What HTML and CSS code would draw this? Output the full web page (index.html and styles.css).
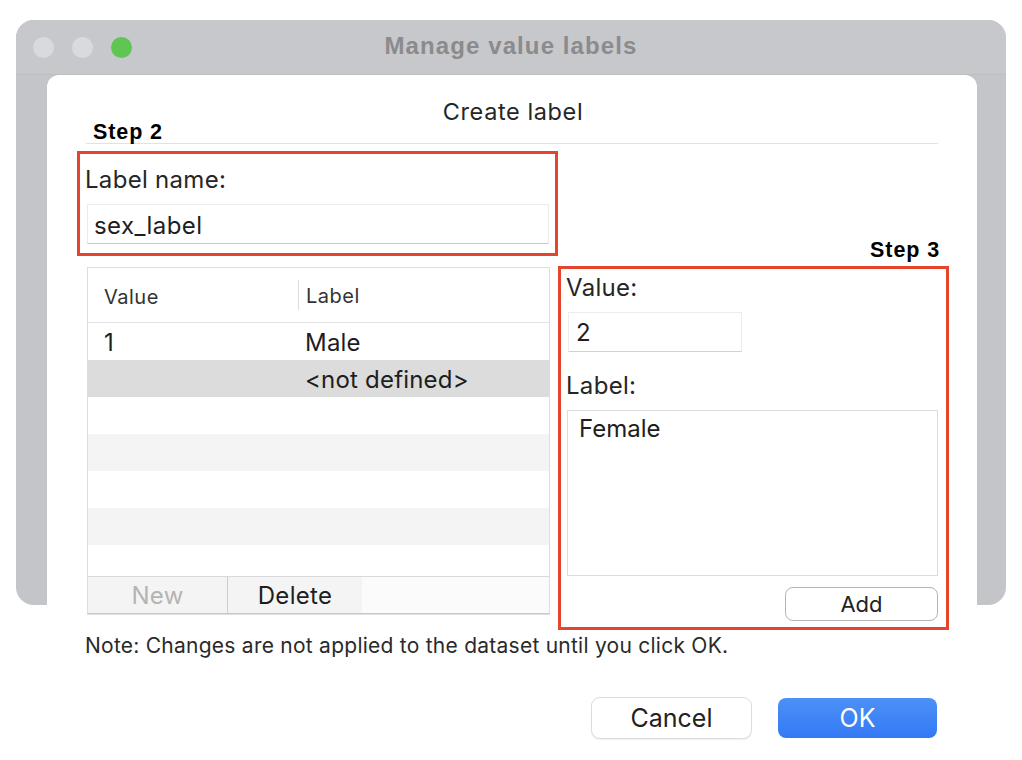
FILE: index.html
```html
<!DOCTYPE html>
<html>
<head>
<meta charset="utf-8">
<link rel="stylesheet" href="styles.css">
</head>
<body>
<div class="window">
  <div class="titlebar">
    <div class="lights">
      <span class="light gray"></span>
      <span class="light gray"></span>
      <span class="light green"></span>
    </div>
    <div class="wintitle">Manage value labels</div>
  </div>
  <div class="sheet">
    <div class="sheet-title">Create label</div>
    <div class="step step2">Step 2</div>
    <div class="sep"></div>
    <div class="main">
      <div class="redbox box1">
        <div class="flabel">Label name:</div>
        <div class="input name-input">sex_label</div>
      </div>
      <div class="table">
        <div class="thead">
          <div class="th c1">Value</div>
          <div class="th c2">Label</div>
        </div>
        <div class="tbody">
          <div class="tr"><div class="td c1">1</div><div class="td c2">Male</div></div>
          <div class="tr sel"><div class="td c1"></div><div class="td c2">&lt;not defined&gt;</div></div>
          <div class="tr"></div>
          <div class="tr alt"></div>
          <div class="tr"></div>
          <div class="tr alt"></div>
          <div class="tr last"></div>
        </div>
        <div class="tbar">
          <div class="tbtn disabled">New</div>
          <div class="tbtn">Delete</div>
          <div class="tfill"></div>
        </div>
      </div>
      <div class="redbox box2">
        <div class="step step3">Step 3</div>
        <div class="flabel">Value:</div>
        <div class="input value-input">2</div>
        <div class="flabel label2">Label:</div>
        <div class="textarea">Female</div>
        <div class="addrow"><div class="addbtn">Add</div></div>
      </div>
    </div>
    <div class="note">Note: Changes are not applied to the dataset until you click OK.</div>
    <div class="actions">
      <div class="btn cancel">Cancel</div>
      <div class="btn ok">OK</div>
    </div>
  </div>
</div>
</body>
</html>
```
FILE: styles.css
```css
html, body {
  margin: 0;
  padding: 0;
  background: #ffffff;
}
body {
  width: 1022px;
  height: 760px;
  overflow: hidden;
  font-family: Inter, "Noto Sans", "Liberation Sans", sans-serif;
  color: #222222;
}
.window {
  margin: 20px 0 0 16px;
  width: 990px;
  height: 585px;
  background: #c4c5c8;
  border-radius: 18px;
  display: flex;
  flex-direction: column;
}
.titlebar {
  height: 55px;
  flex: none;
  background: #c7c8cb;
  border-radius: 18px 18px 0 0;
  border-bottom: 1px solid #bdbec1;
  box-sizing: border-box;
  display: flex;
  align-items: center;
  position: relative;
}
.lights {
  display: flex;
  gap: 18px;
  padding-left: 17px;
}
.light {
  width: 21px;
  height: 21px;
  border-radius: 50%;
  display: block;
}
.light.gray { background: #d9dadf; }
.light.green { background: #5fc553; }
.wintitle {
  position: absolute;
  left: 0;
  right: 0;
  top: 12px;
  text-align: center;
  font-family: "Liberation Sans", Arial, sans-serif;
  font-weight: bold;
  font-size: 24px;
  letter-spacing: 1.1px;
  color: #8b8b8d;
}
.sheet {
  margin: 0 29px 0 31px;
  height: 700px;
  flex: none;
  background: #ffffff;
  border-radius: 12px 12px 0 0;
  padding: 0 28px 0 30px;
  box-sizing: border-box;
}
.sheet-title {
  padding-top: 24px;
  height: 25px;
  line-height: 25px;
  text-align: center;
  font-size: 23.5px;
  letter-spacing: 0.6px;
  color: #262626;
}
.step {
  font-family: "Liberation Sans", Arial, sans-serif;
  font-weight: bold;
  font-size: 21.5px;
  letter-spacing: 0.9px;
  color: #000000;
  line-height: 19px;
}
.step2 {
  padding-left: 16px;
  margin-top: -1px;
}
.sep {
  height: 1px;
  background: #e2e2e2;
  margin: 1px 11px 0 9px;
}
.main {
  margin-top: 7px;
  display: grid;
  grid-template-columns: 481px 391px;
  grid-template-rows: auto auto;
}
.redbox {
  border: 3px solid #e5452d;
  box-sizing: border-box;
}
.box1 {
  grid-column: 1;
  grid-row: 1;
  height: 105px;
  padding: 12px 6px 0 5px;
}
.flabel {
  font-size: 24px;
  letter-spacing: 0.3px;
  line-height: 28px;
  color: #262626;
}
.input {
  background: #ffffff;
  border: 1px solid #ebebeb;
  border-bottom-color: #c9c9c9;
  height: 40px;
  box-sizing: border-box;
  font-size: 24px;
  letter-spacing: 0.4px;
  line-height: 40px;
  color: #1e1e1e;
  padding-left: 6px;
}
.name-input {
  margin: 10px 0 0 2px;
  padding-top: 2px;
  line-height: 38px;
}
.table {
  grid-column: 1;
  grid-row: 2;
  margin: 11px 8px 0 10px;
  height: 348px;
  border: 1px solid #dedede;
  box-sizing: border-box;
  display: flex;
  flex-direction: column;
}
.thead {
  height: 55px;
  flex: none;
  display: flex;
  align-items: center;
  border-bottom: 1px solid #e3e3e3;
  box-sizing: border-box;
  padding-top: 3px;
}
.th {
  font-size: 20px;
  letter-spacing: 0.5px;
  color: #333333;
}
.c1 {
  width: 210px;
  padding-left: 16px;
  box-sizing: border-box;
}
.c2 {
  flex: 1;
  padding-left: 7px;
}
.th.c2 {
  border-left: 1px solid #dcdcdc;
  line-height: 27px;
  margin-top: -3px;
  padding-top: 3px;
}
.tbody {
  flex: 1;
  display: flex;
  flex-direction: column;
}
.tr {
  height: 37px;
  flex: none;
  display: flex;
  align-items: center;
  font-size: 24px;
  letter-spacing: 0.2px;
  color: #1e1e1e;
  padding-top: 2px;
  box-sizing: border-box;
}
.tr.sel { background: #dcdcdc; }
.tr.alt { background: #f4f4f4; }
.tr.last { flex: 1; }
.td.c2 { padding-left: 7px; }
.tbar {
  height: 38px;
  flex: none;
  display: flex;
  border-top: 1px solid #d9d9d9;
  border-bottom: 1px solid #c9c9c9;
  box-sizing: border-box;
  background: #fbfbfb;
}
.tbtn {
  width: 139px;
  background: #f4f4f4;
  border-right: 1px solid #cdcdcd;
  text-align: center;
  font-size: 24px;
  letter-spacing: 0.3px;
  line-height: 38px;
  color: #1e1e1e;
}
.tbtn + .tbtn {
  width: 134px;
  border-right: none;
}
.tbtn.disabled { color: #b4b4b4; }
.tfill { flex: 1; }
.box2 {
  grid-column: 2;
  grid-row: 2;
  margin-top: 10px;
  height: 364px;
  padding: 5px 8px 0 5px;
  position: relative;
  display: flex;
  flex-direction: column;
}
.step3 {
  position: absolute;
  right: 6px;
  bottom: 100%;
  margin-bottom: 9px;
}
.value-input {
  width: 174px;
  margin: 10px 0 0 2px;
  padding-left: 7px;
  border-color: #ececec;
  border-bottom-color: #d2d2d2;
}
.label2 {
  margin-top: 20px;
}
.textarea {
  margin: 10px 0 0 1px;
  height: 166px;
  border: 1px solid #dcdcdc;
  box-sizing: border-box;
  padding: 3px 11px;
  font-size: 24px;
  line-height: 30px;
  color: #1e1e1e;
}
.addrow {
  display: flex;
  justify-content: flex-end;
  margin-top: 11px;
}
.addbtn {
  width: 153px;
  height: 34px;
  box-sizing: border-box;
  border: 1px solid #b3b3b3;
  border-radius: 8px;
  background: #ffffff;
  text-align: center;
  font-size: 22px;
  line-height: 33px;
  color: #222222;
}
.note {
  margin: 4px 0 0 8px;
  font-size: 21px;
  letter-spacing: 0.25px;
  line-height: 24px;
  color: #2a2a2a;
}
.actions {
  display: flex;
  justify-content: flex-end;
  gap: 27px;
  margin: 40px 12px 0 0;
}
.btn {
  width: 159px;
  height: 40px;
  border-radius: 8px;
  box-sizing: border-box;
  text-align: center;
  font-size: 25px;
  line-height: 40px;
}
.cancel {
  background: #ffffff;
  color: #222222;
  box-shadow: 0 0 0 1px #dcdcdc, 0 1px 2px rgba(0,0,0,0.2);
}
.ok {
  background: linear-gradient(#4c91f6, #3479f5);
  color: #ffffff;
}
```
